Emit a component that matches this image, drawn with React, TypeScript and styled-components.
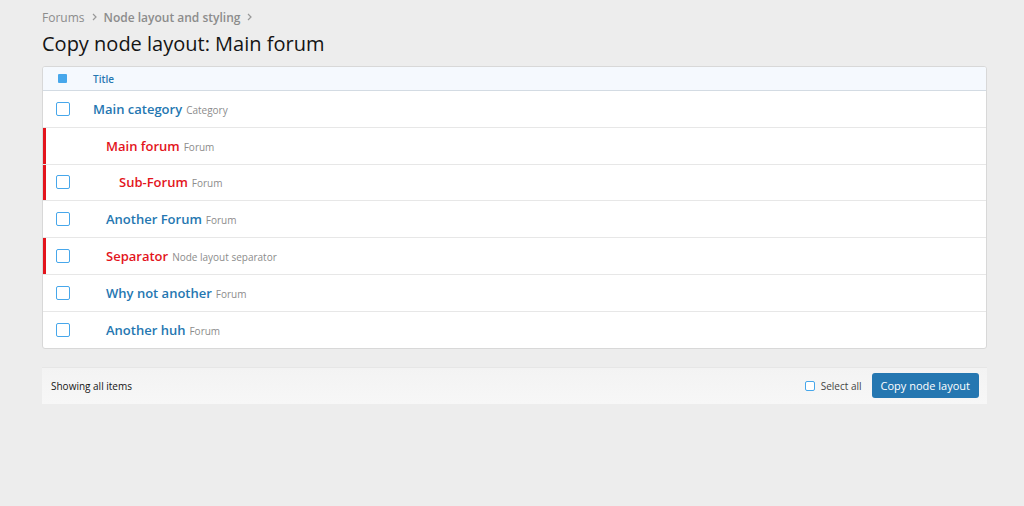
import styled, { createGlobalStyle } from "styled-components";

const GlobalStyle = createGlobalStyle`
    body {
        margin: 0;
        background: #ededed;
        font-family: "Open Sans", "Noto Sans", sans-serif;
        color: #141414;
    }
`;

const Page = styled.div`
    padding: 8px 37px 0 42px;
    width: 1024px;
    box-sizing: border-box;
`;

const Crumbs = styled.div`
    display: flex;
    align-items: center;
    gap: 6px;
    font-size: 12px;
    color: #8c8c8c;
    height: 18px;
`;

const Crumb = styled.span<{ $strong?: boolean }>`
    font-weight: ${(p) => (p.$strong ? 600 : 400)};
`;

const Chevron = styled.svg`
    width: 7px;
    height: 8px;
    fill: none;
    stroke: #999;
    stroke-width: 1.2;
`;

const Title = styled.h1`
    margin: 6px 0 10px;
    font-size: 20px;
    font-weight: 400;
    line-height: 24px;
`;

const Block = styled.div`
    background: #fff;
    border: 1px solid #d8d8d8;
    border-radius: 3px;
    overflow: hidden;
`;

const HeaderRow = styled.div`
    display: flex;
    align-items: center;
    height: 23px;
    background: #f5f9fe;
    border-bottom: 1px solid #d3dbe3;
    font-size: 10px;
    font-weight: 600;
    color: #2577b1;
`;

const CheckCell = styled.div`
    width: 50px;
    padding-left: 13px;
    box-sizing: border-box;
    display: flex;
    align-items: center;
    flex-shrink: 0;
`;

const FilledBox = styled.span`
    width: 9px;
    height: 9px;
    margin-left: 2px;
    background: #47a7eb;
    border-radius: 1px;
`;

const Box = styled.span<{ $size?: number }>`
    width: ${(p) => p.$size ?? 12}px;
    height: ${(p) => p.$size ?? 12}px;
    border: 1.5px solid #47a7eb;
    border-radius: 2px;
    box-sizing: border-box;
    background: #fff;
`;

const Row = styled.div<{ $flag?: boolean }>`
    display: flex;
    align-items: center;
    height: 35.8px;
    border-bottom: 1px solid #e7e7e7;
    box-shadow: ${(p) => (p.$flag ? "inset 3px 0 0 #e3141c" : "none")};
    &:last-child {
        border-bottom: none;
    }
`;

const NodeCell = styled.div<{ $depth: number }>`
    padding-left: ${(p) => p.$depth * 13}px;
    display: flex;
    align-items: baseline;
    gap: 4px;
`;

const NodeName = styled.span<{ $flag?: boolean }>`
    font-size: 13px;
    font-weight: 600;
    color: ${(p) => (p.$flag ? "#e3141c" : "#2577b1")};
`;

const NodeHint = styled.span`
    font-size: 10px;
    color: #8c8c8c;
`;

const Footer = styled.div`
    margin-top: 18px;
    height: 36px;
    display: flex;
    align-items: center;
    justify-content: space-between;
    padding: 0 8px 0 9px;
    background: linear-gradient(#f3f3f3, #f7f7f7);
    border-top: 1px solid #e6e6e6;
    font-size: 10px;
    color: #141414;
`;

const FooterRight = styled.div`
    display: flex;
    align-items: center;
    gap: 10px;
`;

const SelectAll = styled.label`
    display: flex;
    align-items: center;
    gap: 6px;
    color: #444;
`;

const Button = styled.button`
    height: 25px;
    padding: 0 9px;
    border: none;
    border-radius: 3px;
    background: #2577b1;
    color: #fff;
    font-family: inherit;
    font-size: 11px;
`;

type Node = { name: string; hint: string; depth: number; flag?: boolean; noBox?: boolean };

const nodes: Node[] = [
    { name: "Main category", hint: "Category", depth: 0 },
    { name: "Main forum", hint: "Forum", depth: 1, flag: true, noBox: true },
    { name: "Sub-Forum", hint: "Forum", depth: 2, flag: true },
    { name: "Another Forum", hint: "Forum", depth: 1 },
    { name: "Separator", hint: "Node layout separator", depth: 1, flag: true },
    { name: "Why not another", hint: "Forum", depth: 1 },
    { name: "Another huh", hint: "Forum", depth: 1 },
];

const Arrow = () => (
    <Chevron viewBox="0 0 7 8">
        <path d="M2 1l3 3-3 3" />
    </Chevron>
);

const App = () => {
    return (
        <>
            <GlobalStyle />
            <Page>
                <Crumbs>
                    <Crumb>Forums</Crumb>
                    <Arrow />
                    <Crumb $strong>Node layout and styling</Crumb>
                    <Arrow />
                </Crumbs>
                <Title>Copy node layout: Main forum</Title>
                <Block>
                    <HeaderRow>
                        <CheckCell>
                            <FilledBox />
                        </CheckCell>
                        Title
                    </HeaderRow>
                    {nodes.map((node) => (
                        <Row key={node.name} $flag={node.flag}>
                            <CheckCell>{!node.noBox && <Box $size={14} />}</CheckCell>
                            <NodeCell $depth={node.depth}>
                                <NodeName $flag={node.flag}>{node.name}</NodeName>
                                <NodeHint>{node.hint}</NodeHint>
                            </NodeCell>
                        </Row>
                    ))}
                </Block>
                <Footer>
                    <span>Showing all items</span>
                    <FooterRight>
                        <SelectAll>
                            <Box $size={10} />
                            Select all
                        </SelectAll>
                        <Button>Copy node layout</Button>
                    </FooterRight>
                </Footer>
            </Page>
        </>
    );
};

export default App;
